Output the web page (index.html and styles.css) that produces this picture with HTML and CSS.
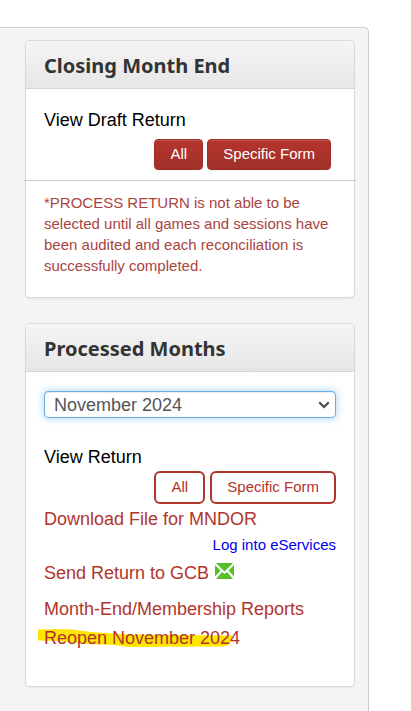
FILE: index.html
```html
<!DOCTYPE html>
<html lang="en">
<head>
<meta charset="utf-8">
<meta name="viewport" content="width=device-width, initial-scale=1">
<title>Month End</title>
<link rel="stylesheet" href="styles.css">
</head>
<body>
<main class="panel">
  <section class="card">
    <h2 class="card-title">Closing Month End</h2>
    <div class="card-body">
      <p class="line">View Draft Return</p>
      <div class="actions actions-solid">
        <button type="button" class="btn btn-solid">All</button>
        <button type="button" class="btn btn-solid">Specific Form</button>
      </div>
      <hr class="rule">
      <p class="note">*PROCESS RETURN is not able to be selected until all games and sessions have been audited and each reconciliation is successfully completed.</p>
    </div>
  </section>

  <section class="card">
    <h2 class="card-title">Processed Months</h2>
    <div class="card-body card-body-tall">
      <div class="select-wrap">
        <select class="month" aria-label="Processed month">
          <option>November 2024</option>
        </select>
        <svg class="chevron" width="12" height="8" viewBox="0 0 12 8" aria-hidden="true"><path d="M1.2 1.2 6 6 10.8 1.2" fill="none" stroke="#4a4a4a" stroke-width="2.2"/></svg>
      </div>
      <p class="line">View Return</p>
      <div class="actions actions-outline">
        <button type="button" class="btn btn-outline">All</button>
        <button type="button" class="btn btn-outline">Specific Form</button>
      </div>
      <a class="line link" href="#download">Download File for MNDOR</a>
      <a class="login" href="#eservices">Log into eServices</a>
      <a class="line link send" href="#send">Send Return to GCB
        <svg width="19" height="16" viewBox="0 0 19 16" aria-hidden="true"><path fill="#56bf28" d="M1 0h17L9.500 8.500zM0 2l5.500 5.500L0 13.500zM19 2v11.500l-5.500-6zM1 16l6-7 2.500 2 2.500-2 6 7z"/></svg>
      </a>
      <a class="line link reports" href="#reports">Month-End/Membership Reports</a>
      <a class="line link reopen" href="#reopen">
        <svg class="marker" width="196" height="20" viewBox="0 0 196 20" aria-hidden="true"><path fill="#ffe600" d="M0 1.500 22 1 35 1.500 53 4 90 6.500 194 7.500Q194 14 191 16.500 187 19 178 18.500L95 19Q84 18.500 76 17L49 16 20 13 0 12.500z"/></svg>
        <span class="reopen-text">Reopen November 2024</span>
      </a>
    </div>
  </section>
</main>
</body>
</html>
```
FILE: styles.css
```css
* {
  box-sizing: border-box;
}

body {
  margin: 0;
  background: #fff;
  color: #000;
  font-family: "Liberation Sans", Arial, sans-serif;
  font-size: 18px;
}

.panel {
  display: flex;
  flex-direction: column;
  gap: 25px;
  min-height: calc(100vh - 27px);
  margin: 27px 42px 0 0;
  padding: 12px 13px 24px 25px;
  background: #f4f4f4;
  border: 1px solid #ccc;
  border-width: 1px 1px 0 0;
  border-radius: 0 5px 0 0;
}

.card {
  background: #fff;
  border: 1px solid #d9d9d9;
  border-radius: 5px;
  box-shadow: 0 1px 2px rgba(0, 0, 0, 0.06);
}

.card-title {
  margin: 0;
  padding: 2px 18px 0;
  border-bottom: 1px solid #d5d5d5;
  border-radius: 4px 4px 0 0;
  background: linear-gradient(#f5f5f5, #e6e6e6);
  color: #333;
  font: bold 20px/45px "Noto Sans", "Open Sans", sans-serif;
}

.card-body {
  padding: 19px 18px 20px;
}

.card-body-tall {
  padding-bottom: 36px;
}

.line {
  display: block;
  margin: 0;
  line-height: 24px;
}

.actions {
  display: flex;
  justify-content: flex-end;
}

.actions-solid {
  gap: 4px;
  margin: 7px 5px 10px 0;
}

.actions-outline {
  gap: 5px;
  margin: 2px 0 3px;
}

.btn {
  padding: 0 15px 2px;
  font-family: inherit;
  font-size: 15px;
  cursor: pointer;
}

.btn-solid {
  min-width: 49px;
  height: 31px;
  border: 1px solid #a02c25;
  border-radius: 4px;
  background: linear-gradient(#b5352d, #a03028);
  box-shadow: inset 0 1px 0 rgba(255, 255, 255, 0.15), 0 1px 2px rgba(0, 0, 0, 0.05);
  color: #fff;
}

.btn-outline {
  min-width: 51px;
  height: 33px;
  border: 2px solid #b0352d;
  border-radius: 6px;
  background: #fff;
  color: #b0352d;
}

.rule {
  height: 1px;
  margin: 0 -20px 11px;
  border: 0;
  background: #ccc;
}

.note {
  margin: 0 0 1px;
  color: #a94442;
  font-size: 15px;
  line-height: 21px;
}

.select-wrap {
  position: relative;
  margin: 0 0 27px;
}

.month {
  display: block;
  width: 100%;
  height: 27px;
  padding: 0 28px 0 9px;
  appearance: none;
  border: 1px solid #66afe9;
  border-radius: 4px;
  background: #fff;
  box-shadow: inset 0 1px 1px rgba(0, 0, 0, 0.08), 0 0 8px rgba(102, 175, 233, 0.6);
  color: #555;
  font-family: inherit;
  font-size: 18px;
}

.chevron {
  position: absolute;
  top: 10px;
  right: 6px;
  pointer-events: none;
}

.link {
  color: #b0352d;
  text-decoration: none;
}

.login {
  display: block;
  margin: 4px 0 6px;
  color: #00e;
  font-size: 15px;
  line-height: 20px;
  text-align: right;
  text-decoration: none;
}

.send {
  display: flex;
  align-items: center;
  gap: 6px;
}

.send svg {
  margin-bottom: 4px;
}

.reports {
  margin: 12px 0 5px;
}

.reopen {
  position: relative;
}

.marker {
  position: absolute;
  top: 2px;
  left: -6px;
}

.reopen-text {
  position: relative;
}
```
